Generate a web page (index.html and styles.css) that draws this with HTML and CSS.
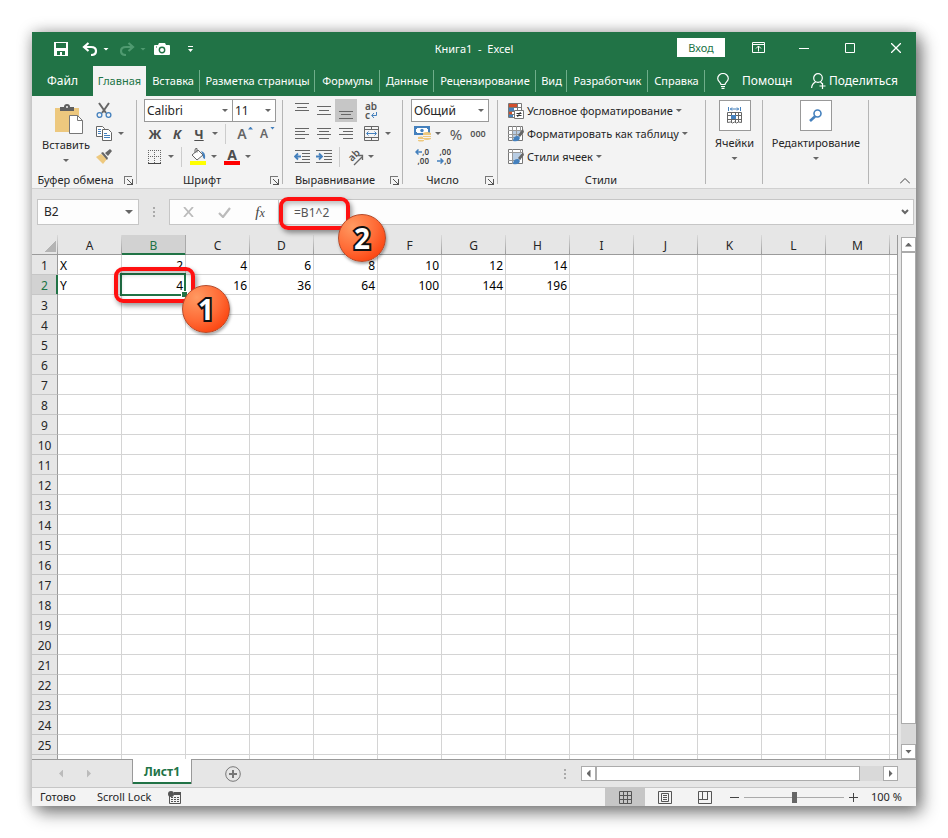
FILE: index.html
```html
<!DOCTYPE html>
<html lang="ru">
<head>
<meta charset="utf-8">
<title>Книга1 - Excel</title>
<link rel="stylesheet" href="styles.css">
</head>
<body>
<div class="window">
  <header class="titlebar">
    <div class="quick">
      <button class="w22" aria-label="Сохранить"><svg width="14" height="14" viewBox="0 0 14 14"><path d="M0 0h14v14H0z" fill="#fff"/><path d="M2 1h10v5H2zM3 9h8v4H8v-3H6v3H3z" fill="#217346"/></svg></button>
      <button class="w22 undo" aria-label="Отменить"><svg width="16" height="14" viewBox="0 0 16 14" fill="none" stroke="#fff" stroke-width="2.2"><path d="M6.500 1L2 5l4.500 4M2 5h7c3 0 5 1.500 5 4s-2 4-5 4"/></svg></button>
      <span class="caret"></span>
      <button class="w22 redo" aria-label="Вернуть"><svg width="16" height="14" viewBox="0 0 16 14" fill="none" stroke="#4f9a70" stroke-width="2.200"><path d="M9.500 1L14 5 9.500 9M14 5H7C4 5 2 6.500 2 9s2 4 5 4"/></svg></button>
      <span class="caret faded"></span>
      <button class="w22 camera" aria-label="Камера"><svg width="16" height="13" viewBox="0 0 16 13"><path d="M0 3q0-1 1-1h3l1-2h6l1 2h3q1 0 1 1v8q0 1-1 1H1q-1 0-1-1z" fill="#fff"/><circle cx="8" cy="7" r="2.700" fill="none" stroke="#217346" stroke-width="1.400"/><path d="M2 4h1" stroke="#217346"/></svg></button>
      <button class="w22 more" aria-label="Настройка панели"><svg width="5" height="7" viewBox="0 0 5 7" fill="#fff"><path d="M0 0h5v1H0zM0 3h5L2.500 6z"/></svg></button>
    </div>
    <div class="doc-title">Книга1&nbsp; -&nbsp; Excel</div>
    <div class="controls">
      <button class="signin">Вход</button>
      <button class="ctl" aria-label="Параметры ленты"><svg width="13" height="11" viewBox="0 0 13 11" fill="none" stroke="#fff"><path d="M.5.500h12v10H.5zM0 2.500h13M6.500 9.500V4M4 6.500L6.500 4 9 6.500"/></svg></button>
      <button class="ctl" aria-label="Свернуть"><svg width="10" height="10" viewBox="0 0 10 10" stroke="#fff"><path d="M0 5.500h10"/></svg></button>
      <button class="ctl" aria-label="Развернуть"><svg width="10" height="10" viewBox="0 0 10 10" fill="none" stroke="#fff"><path d="M.5.500h9v9h-9z"/></svg></button>
      <button class="ctl close" aria-label="Закрыть"><svg width="10" height="10" viewBox="0 0 10 10" stroke="#fff" stroke-width="1.300"><path d="M0 0l10 10M10 0L0 10"/></svg></button>
    </div>
  </header>

  <nav class="tabs">
    <a class="file" href="#">Файл</a><a class="active" href="#">Главная</a><a href="#">Вставка</a><a href="#">Разметка страницы</a><a href="#">Формулы</a><a href="#">Данные</a><a href="#">Рецензирование</a><a href="#">Вид</a><a href="#">Разработчик</a><a href="#">Справка</a>
    <a class="tool help" href="#"><svg width="12" height="16" viewBox="0 0 12 16" fill="none" stroke="#fff" stroke-width="1.200"><path d="M4 11.500c0-2-3.300-3-3.300-6a5.300 5 0 0 1 10.600 0c0 3-3.300 4-3.300 6zM4 13.500h4M4.500 15.300h3"/></svg>Помощн</a>
    <a class="tool share" href="#"><svg width="15" height="16" viewBox="0 0 15 16" fill="none" stroke="#fff" stroke-width="1.200"><circle cx="7" cy="5" r="4.300"/><path d="M.6 15c.2-3 1.800-5 4-6M9.500 9l1.500 1.500M11.500 10v6M8.500 13h6"/></svg>Поделиться</a>
  </nav>

  <section class="ribbon">
    <div class="group clip">
      <div class="clip-body">
        <button class="big paste">
          <svg width="30" height="31" viewBox="0 0 30 31"><path d="M1 5h24v24H1z" fill="#edc87e"/><path d="M6 4h4q0-3 3-3t3 3h4v4H6z" fill="#5f5f5f"/><circle cx="13" cy="4" r="1" fill="#f3f3f3"/><path d="M15.500 12.500h8l5 5v13h-13z" fill="#fff" stroke="#777"/><path d="M23.500 12.500v5h5" fill="none" stroke="#777"/></svg>
          <span>Вставить</span><i class="caret"></i>
        </button>
        <div class="clip-side">
          <div class="row"><button class="w22" aria-label="Вырезать"><svg width="16" height="17" viewBox="0 0 16 17" fill="none"><path d="M3 1l7 10M13 1L6 11" stroke="#666" stroke-width="2"/><circle cx="3.500" cy="13" r="2.400" stroke="#4480bd" stroke-width="1.300"/><circle cx="12.500" cy="13" r="2.400" stroke="#4480bd" stroke-width="1.300"/></svg></button></div>
          <div class="row"><button class="w22" aria-label="Копировать"><svg width="16" height="15" viewBox="0 0 16 15" fill="#fff" stroke="#666"><path d="M.5.500h6l2 2v8h-8z"/><path d="M6.500 3.500h6l3 3v8h-9z"/><path d="M2 3.500h3M2 5.500h3M2 7.500h3M8 7.500h3M8 9.500h6M8 11.500h6" stroke="#4480bd"/></svg></button><span class="caret gap"></span></div>
          <div class="row"><button class="w22" aria-label="Формат по образцу"><svg width="16" height="15" viewBox="0 0 16 15"><path d="M0 8l5-3 6 5-4 5z" fill="#edc87e"/><path d="M5 4l2-1 5 6-1 2zM9 4l5-4 2 2-4 5z" fill="#666"/></svg></button></div>
        </div>
      </div>
      <div class="label">Буфер обмена<button class="launch" aria-label="Буфер обмена"></button></div>
    </div>

    <div class="group font">
      <div class="row"><label class="combo face"><select aria-label="Шрифт"><option>Calibri</option></select></label><label class="combo size"><select aria-label="Размер"><option>11</option></select></label></div>
      <div class="row">
        <button class="w22 letter">Ж</button><button class="w22 letter ital">К</button><button class="w22 letter under">Ч</button><span class="caret"></span><span class="sep"></span>
        <button class="w22 letter grow">A<i class="tri up"></i></button><button class="w22 letter shrink">A<i class="tri down"></i></button>
      </div>
      <div class="row">
        <button class="w22" aria-label="Границы"><svg width="14" height="14" viewBox="0 0 14 14" fill="none" stroke="#666"><path d="M.5 0v13M6.500 0v13M12.500 0v13M0 .5h13M0 6.500h13" stroke-dasharray="1 1"/><path d="M0 13.500h13" stroke="#444"/></svg></button><span class="caret"></span><span class="sep"></span>
        <button class="w22" aria-label="Заливка"><svg width="17" height="17" viewBox="0 0 17 17"><path d="M2 7l6-5 5 5-6 5z" fill="#fff" stroke="#666"/><path d="M5 5V2q0-2 2-1.500v4" fill="none" stroke="#666"/><path d="M11 3q5 1 4 8-3-1-2-4z" fill="#4480bd"/><path d="M0 13h16v4H0z" fill="#ff0"/></svg></button><span class="caret"></span>
        <button class="w22 letter color">A</button><span class="caret"></span>
      </div>
      <div class="label">Шрифт<button class="launch" aria-label="Шрифт"></button></div>
    </div>

    <div class="group align">
      <div class="row">
        <button class="w22" aria-label="По верхнему краю"><svg class="ln" viewBox="0 0 14 16"><path d="M0 .5h14M2 4.500h10M0 7.500h14"/></svg></button>
        <button class="w22" aria-label="По середине"><svg class="ln" viewBox="0 0 14 16"><path d="M0 3.500h14M2 7.500h10M0 11.500h14"/></svg></button>
        <button class="w22 pressed" aria-label="По нижнему краю"><svg class="ln" viewBox="0 0 14 16"><path d="M0 8.500h14M2 11.500h10M0 15.500h14"/></svg></button>
        <button class="w22 wrap" aria-label="Перенос текста"><span>ab</span><span>c<svg width="6" height="6" viewBox="0 0 6 6" fill="none" stroke="#4480bd"><path d="M5.500 0v3.500H1M3 1L.7 3.500 3 6"/></svg></span></button>
      </div>
      <div class="row">
        <button class="w22" aria-label="По левому краю"><svg class="ln" viewBox="0 0 14 16"><path d="M0 2.500h14M0 5.500h10M0 8.500h14M0 12.500h10"/></svg></button>
        <button class="w22" aria-label="По центру"><svg class="ln" viewBox="0 0 14 16"><path d="M0 2.500h14M2 5.500h10M0 8.500h14M2 12.500h10"/></svg></button>
        <button class="w22" aria-label="По правому краю"><svg class="ln" viewBox="0 0 14 16"><path d="M0 2.500h14M4 5.500h10M0 8.500h14M4 12.500h10"/></svg></button>
        <button class="w22 merge" aria-label="Объединить"><svg width="15" height="15" viewBox="0 0 15 15" fill="none" stroke="#666"><path d="M.5.500h14v14H.5zM0 3.500h15M0 11.500h15M7.500 0v3M7.500 12v3"/><path d="M3 7.500h9M4.500 5.500l-2 2 2 2M10.500 5.500l2 2-2 2" stroke="#4480bd"/></svg></button><span class="caret gap"></span>
      </div>
      <div class="row">
        <button class="w22" aria-label="Уменьшить отступ"><svg width="16" height="13" viewBox="0 0 16 13" fill="none" stroke="#666"><path d="M1 .5h15M8 3.500h8M8 6.500h8M8 9.500h8M1 12.500h15"/><path d="M1 6.500h6M4 3.500l-3 3 3 3" stroke="#4480bd" stroke-width="1.800"/></svg></button>
        <button class="w22" aria-label="Увеличить отступ"><svg width="16" height="13" viewBox="0 0 16 13" fill="none" stroke="#666"><path d="M0 .5h16M8 3.500h8M8 6.500h8M8 9.500h8M0 12.500h16"/><path d="M0 6.500h6M3 3.500l3 3-3 3" stroke="#4480bd" stroke-width="1.800"/></svg></button><span class="sep sep-tight"></span>
        <button class="w22 orient" aria-label="Ориентация"><svg width="18" height="18" viewBox="0 0 18 18"><text x="6" y="14" transform="rotate(-45 6 14)" class="ab">ab</text><path d="M8 17l8-8M12 7.500h4.500V12" fill="none" stroke="#666" stroke-width="1.300"/></svg></button><span class="caret"></span>
      </div>
      <div class="label">Выравнивание<button class="launch" aria-label="Выравнивание"></button></div>
    </div>

    <div class="group number">
      <div class="row"><label class="combo"><select aria-label="Формат числа"><option>Общий</option></select></label></div>
      <div class="row">
        <button class="w22" aria-label="Финансовый формат"><svg width="17" height="16" viewBox="0 0 17 16"><path d="M0 0h16v9H0z" fill="#4480bd"/><path d="M3 2h10v1h1v3h-1v1H3V6H2V3h1z" fill="#fff"/><circle cx="8" cy="4.500" r="1.700" fill="#4480bd"/><path d="M9 7q4-2 8 0v6q-4 2-8 0zM4 11q3-1 6 0v4q-3 1-6 0z" fill="#edc87e"/><path d="M9 9.500h8M9 11.500h8M4 13.500h6" stroke="#f3f3f3"/></svg></button><span class="caret"></span>
        <button class="w22 percent">%</button><button class="w22 thousands">000</button>
      </div>
      <div class="row">
        <button class="w22 digits" aria-label="Увеличить разрядность"><span><svg width="7" height="6" viewBox="0 0 7 6" fill="none" stroke="#4480bd" stroke-width="1.500"><path d="M1 3h6M3.500.500L1 3l2.500 2.500"/></svg>,0</span><span>,00</span></button><button class="w22 digits" aria-label="Уменьшить разрядность"><span>,00</span><span><svg width="7" height="6" viewBox="0 0 7 6" fill="none" stroke="#4480bd" stroke-width="1.500"><path d="M0 3h6M3.500.500L6 3 3.500 5.500"/></svg>,0</span></button>
      </div>
      <div class="label">Число<button class="launch" aria-label="Число"></button></div>
    </div>

    <div class="group styles">
      <div class="row"><button class="text"><svg width="16" height="16" viewBox="0 0 16 16"><path d="M.5.500h13v14H.5zM0 4.500h14M0 8.500h8M0 11.500h6M9.500 0v8" fill="#fff" stroke="#777"/><path d="M1 1h8v3H1zM1 9h3v2H1z" fill="#d24f2d"/><path d="M1 5h5v3H1zM1 12h4v2H1z" fill="#4480bd"/><path d="M6.500 7.500h9v8h-9z" fill="#fff" stroke="#777"/><path d="M8.500 10.500h5M8.500 12.500h5M12.500 9l-3 5" stroke="#333"/></svg>Условное форматирование<i class="caret"></i></button></div>
      <div class="row"><button class="text"><svg width="16" height="16" viewBox="0 0 16 16"><path d="M.5.500h14v14H.5z" fill="#fff" stroke="#777"/><path d="M5 4h7v7H5z" fill="#b9cde3"/><path d="M0 4.500h15M0 8.500h15M0 11.500h10M4.500 0v15M8.500 0v12M12.500 0v8" stroke="#999"/><path d="M15 3l-5 6 2 2 4-5z" fill="#666"/><path d="M5 15q0-5 5-5 3 1 1 4-2 2-6 1z" fill="#4480bd"/></svg>Форматировать как таблицу<i class="caret"></i></button></div>
      <div class="row"><button class="text"><svg width="16" height="16" viewBox="0 0 16 16"><path d="M.5.500h14v14H.5z" fill="#fff" stroke="#777"/><path d="M5 4h8v7H5z" fill="#b9cde3"/><path d="M0 3.500h15M0 11.500h8M4.500 0v15M12.500 0v4" stroke="#999"/><path d="M15 3l-5 6 2 2 4-5z" fill="#666"/><path d="M5 15q0-5 5-5 3 1 1 4-2 2-6 1z" fill="#4480bd"/></svg>Стили ячеек<i class="caret"></i></button></div>
      <div class="label">Стили</div>
    </div>

    <div class="group">
      <button class="big boxed"><span class="box"><svg width="16" height="17" viewBox="0 0 16 17" fill="none"><path d="M1.500 0v4M13.500 0v4M3 2h9M5 .5L3.500 2 5 3.500M10 .5L11.500 2 10 3.500" stroke="#4480bd"/><path d="M.5 5.500h14v10l-3-.5-2 1-2-1-2 1-2-1-3 .5zM0 8.500h15M0 12.500h15M4.500 5v10M8.500 5v10M11.500 5v10" stroke="#666"/><path d="M4 8h5v4H4z" fill="#4480bd"/></svg></span><span>Ячейки</span><i class="caret"></i></button>
    </div>
    <div class="group">
      <button class="big boxed"><span class="box"><svg width="14" height="14" viewBox="0 0 14 14" fill="none" stroke="#4480bd"><circle cx="8.500" cy="4.500" r="3.500" stroke-width="1.600"/><path d="M6 7.500l-5 4.500" stroke-width="2.600"/></svg></span><span>Редактирование</span><i class="caret"></i></button>
    </div>
    <button class="collapse" aria-label="Свернуть ленту"><svg width="10" height="6" viewBox="0 0 10 6" fill="none" stroke="#444"><path d="M0 5.500l5-5 5 5"/></svg></button>
  </section>

  <section class="formula-bar">
    <label class="namebox"><input value="B2" aria-label="Имя"><i class="caret"></i></label>
    <span class="dots"></span>
    <div class="fx-buttons">
      <button aria-label="Отмена"><svg width="11" height="10" viewBox="0 0 11 10" stroke="#bbb" stroke-width="1.800"><path d="M1 0l9 10M10 0L1 10"/></svg></button>
      <button aria-label="Ввод"><svg width="13" height="11" viewBox="0 0 13 11" fill="none" stroke="#bbb" stroke-width="2.200"><path d="M1 6l4 4 7-9"/></svg></button>
      <button class="fx">f<small>x</small></button>
    </div>
    <input class="formula" value="=B1^2" aria-label="Строка формул">
    <button class="expand" aria-label="Развернуть строку формул"><svg width="8" height="6" viewBox="0 0 8 6" fill="none" stroke="#666" stroke-width="2"><path d="M1 1l3 3 3-3"/></svg></button>
  </section>

  <main class="sheet">
    <div class="grid">
      <table>
        <colgroup><col class="head"><col><col><col><col><col><col><col><col><col><col><col><col><col><col></colgroup>
        <thead><tr><th class="corner"></th><th>A</th><th class="sel">B</th><th>C</th><th>D</th><th>E</th><th>F</th><th>G</th><th>H</th><th>I</th><th>J</th><th>K</th><th>L</th><th>M</th><th></th></tr></thead>
        <tbody id="rows"></tbody>
      </table>
    </div>
    <div class="vscroll"><button aria-label="Вверх"><i class="tri-u"></i></button><div class="thumb"></div><button aria-label="Вниз"><i class="tri-d"></i></button></div>
  </main>

  <footer>
    <div class="sheet-tabs">
      <button class="nav" aria-label="Предыдущий лист"><i class="tri-l"></i></button><button class="nav" aria-label="Следующий лист"><i class="tri-r"></i></button>
      <a class="sheet-tab" href="#">Лист1</a>
      <button class="add" aria-label="Новый лист"><svg width="16" height="16" viewBox="0 0 16 16" fill="none" stroke="#777"><circle cx="8" cy="8" r="7.300"/><path d="M4 8h8M8 4v8" stroke-width="2"/></svg></button>
      <span class="dots"></span>
      <div class="hscroll"><button aria-label="Влево"><i class="tri-l"></i></button><div class="thumb"></div><button aria-label="Вправо"><i class="tri-r"></i></button></div>
    </div>
    <div class="status">
      <span>Готово</span><span class="lock">Scroll Lock</span>
      <svg class="macro" width="13" height="13" viewBox="0 0 13 13"><path d="M6 1h7v3H6z" fill="#555"/><path d="M1.500 5v7.500h11V3" fill="none" stroke="#555"/><path d="M3 6.500h8M3 8.500h8M3 10.500h8" stroke="#555" stroke-dasharray="2 1"/><circle cx="3" cy="3" r="3" fill="#555"/></svg>
      <button class="view on" aria-label="Обычный"><svg width="13" height="13" viewBox="0 0 13 13" fill="none" stroke="#555"><path d="M.5.500h12v12H.5zM0 4.500h13M0 8.500h13M4.500 0v13M8.500 0v13"/></svg></button>
      <button class="view" aria-label="Разметка страницы"><svg width="14" height="13" viewBox="0 0 14 13" fill="none" stroke="#555"><path d="M.5.500h13v12H.5zM3.500 2.500h7v8h-7zM5 4.500h4M5 6.500h4M5 8.500h4"/></svg></button>
      <button class="view" aria-label="Страничный"><svg width="14" height="13" viewBox="0 0 14 13" fill="none" stroke="#555"><path d="M.5.500h13v12H.5zM4.500 0v8M9.500 0v8M0 8.500h10"/></svg></button>
      <button class="zoom" aria-label="Уменьшить"><svg width="9" height="9" viewBox="0 0 9 9" stroke="#444"><path d="M0 4.500h9"/></svg></button>
      <input type="range" min="0" max="100" value="50" aria-label="Масштаб">
      <button class="zoom" aria-label="Увеличить"><svg width="9" height="9" viewBox="0 0 9 9" stroke="#444"><path d="M0 4.500h9M4.500 0v9"/></svg></button>
      <span class="percentage">100 %</span>
    </div>
  </footer>

  <div class="mark mark-cell"></div><div class="ball ball-one">1</div>
  <div class="mark mark-formula"></div><div class="ball ball-two">2</div>
</div>
<script src="rows.js"></script>
</body>
</html>
```
FILE: rows.js
```js
const values = {
  1: ["X", 2, 4, 6, 8, 10, 12, 14],
  2: ["Y", 4, 16, 36, 64, 100, 144, 196]
};
const numbered = 25;
const body = document.getElementById("rows");
for (let r = 1; r <= numbered + 1; r++) {
  const tr = document.createElement("tr");
  const th = document.createElement("th");
  if (r <= numbered) th.textContent = r;
  if (r === 2) th.className = "sel";
  tr.append(th);
  for (let c = 0; c < 14; c++) {
    const td = document.createElement("td");
    const v = (values[r] || [])[c];
    if (v !== undefined) td.textContent = v;
    if (typeof v === "string") td.className = "txt";
    if (r === 2 && c === 1) td.className = "cursor";
    tr.append(td);
  }
  body.append(tr);
}
```
FILE: styles.css
```css
* { box-sizing: border-box; }
body { margin: 0; padding: 32px; background: #fff; font: 12px/16px "Noto Sans", "Open Sans", sans-serif; color: #262626; }
button, input, select { font: inherit; color: inherit; background: none; border: 0; padding: 0; margin: 0; border-radius: 0; }
button { display: inline-flex; align-items: center; justify-content: center; flex: none; }
a { color: inherit; text-decoration: none; }
svg { display: block; flex: none; }
.window { position: relative; height: calc(100vh - 64px); display: flex; flex-direction: column; background: #e6e6e6; box-shadow: 0 0 14px rgba(0,0,0,.28), 6px 7px 16px rgba(0,0,0,.45); }
.w22 { width: 22px; height: 22px; }
.caret { flex: none; width: 10px; height: 3px; background: #666; clip-path: polygon(20% 0, 80% 0, 50% 100%); }

.titlebar { display: grid; grid-template-columns: 1fr auto 1fr; height: 34px; background: #217346; color: #fff; }
.quick { display: flex; align-items: center; padding-left: 18px; }
.quick .caret { background: #fff; }
.quick .faded { background: #4f9a70; }
.undo { margin-left: 7px; }
.redo { margin-left: 5px; }
.camera { margin-left: 3px; }
.more { margin-left: 6px; }
.doc-title { font-size: 11px; line-height: 33px; }
.controls { display: flex; justify-content: flex-end; align-items: flex-start; height: 32px; }
.signin { width: 48px; height: 19px; margin: 6px 10px 0 0; background: #fff; color: #217346; font-size: 11px; }
.ctl { width: 46px; height: 31px; }
.close { width: 43px; padding-left: 3px; }

.tabs { display: grid; grid-template-columns: 61px 53px 54px 115px 65px 54px 102px 31px 81px 57px 95px 1fr; height: 30px; background: #217346; color: #fff; align-items: stretch; white-space: nowrap; font-size: 11px; }
.tabs a { display: flex; justify-content: center; align-items: center; background: linear-gradient(#6fae8a, #6fae8a) right center / 1px 22px no-repeat; }
.tabs .file, .tabs .tool { background: none; font-size: 12px; }
.tabs .active { background: #f3f3f3; color: #217346; }
.tabs .tool { justify-content: flex-start; }
.help { padding-left: 12px; gap: 13px; }
.share { padding-left: 11px; gap: 3px; }

.ribbon { display: grid; grid-template-columns: 105px 146px 120px 95px 208px 57px 106px 1fr; height: 93px; background: #f3f3f3; border-bottom: 1px solid #d0d0d0; }
.group { display: flex; flex-direction: column; padding-top: 3px; background: linear-gradient(#b5b5b5, #b5b5b5) right 4px / 1px 84px no-repeat; min-width: 0; }
.row { display: flex; align-items: center; height: 23px; }
.label { position: relative; margin-top: 4px; height: 16px; text-align: center; font-size: 11px; white-space: nowrap; padding-right: 16px; }
.launch { position: absolute; right: 5px; top: 4px; width: 8px; height: 8px; border: 1px solid #777; border-right: 0; border-bottom: 0; }
.launch::after { content: ""; position: absolute; left: 2px; top: 2px; width: 5px; height: 5px; border: 1px solid #555; border-left: 0; border-top: 0; background: linear-gradient(to top right, transparent 42%, #555 42% 58%, transparent 58%); }
.big { flex-direction: column; justify-content: flex-start; font-size: 11px; }
.clip-body { display: flex; height: 69px; }
.paste { width: 61px; padding: 4px 0 0 7px; }
.paste span { margin-top: 3px; }
.paste .caret { margin-top: 6px; }
.paste svg { margin-left: 5px; }
.clip .label { padding-right: 18px; }
.gap { margin-left: 1px; }

.font .row { padding-left: 7px; }
.combo { position: relative; display: block; width: 78px; height: 23px; background: #fff; border: 1px solid #999; }
.combo select { appearance: none; width: 100%; height: 100%; padding-left: 2px; outline: 0; }
.combo::after { content: ""; position: absolute; right: 4px; top: 9px; width: 6px; height: 3px; background: #666; clip-path: polygon(0 0, 100% 0, 50% 100%); pointer-events: none; }
.face { width: 89px; }
.size { width: 44px; margin-left: -1px; }
.letter { font-weight: 700; font-size: 13px; color: #4d4d4d; }
.ital { font-style: italic; }
.under { text-decoration: underline; }
.sep { flex: none; width: 1px; height: 20px; margin: 0 5px; background: #ccc; }
.sep-tight { margin: 0 4px; }
.grow, .shrink { font-weight: 600; font-size: 14px; position: relative; color: #666; }
.shrink { font-size: 12px; }
.tri { position: absolute; right: 0; top: 4px; width: 5px; height: 3px; background: #4480bd; }
.up { clip-path: polygon(50% 0, 100% 100%, 0 100%); }
.down { clip-path: polygon(0 0, 100% 0, 50% 100%); }
.color { font-size: 14px; line-height: 14px; width: 16px; height: 17px; margin: 0 3px 0 5px; border-bottom: 4px solid #f00; }

.align .row { padding-left: 8px; }
.ln { width: 14px; height: 16px; stroke: #666; fill: none; }
.pressed { height: 23px; background: #c6c6c6; }
.wrap { flex-direction: column; line-height: 10px; font-size: 10px; font-weight: 600; color: #555; margin-left: 3px; }
.wrap span { display: flex; align-items: center; gap: 1px; height: 9px; }
.merge { margin-left: 3px; }
.orient svg { overflow: visible; }
.ab { font: 600 10px "Noto Sans", sans-serif; fill: #555; }

.number .row { padding-left: 8px; }
.percent { font-size: 15px; color: #555; margin-left: 2px; }
.thousands { font-size: 9px; font-weight: 600; color: #555; }
.digits { flex-direction: column; align-items: flex-end; padding-right: 4px; font-size: 8px; line-height: 8px; font-weight: 600; color: #444; }
.digits span { display: flex; align-items: center; height: 9px; }

.styles .row { padding-left: 10px; }
.text { gap: 3px; white-space: nowrap; font-size: 11px; }
.text .caret { margin-left: -2px; }
.styles .label { padding: 0 2px 0 0; }
.boxed { width: 100%; padding-top: 1px; white-space: nowrap; }
.box { display: flex; align-items: center; justify-content: center; width: 32px; height: 31px; border: 1px solid #999; background: #fff; margin-bottom: 4px; }
.boxed .caret { margin-top: 6px; }
.collapse { justify-self: end; align-self: end; padding: 4px 6px; }

.formula-bar { display: flex; align-items: flex-start; padding: 10px 2px 0 5px; height: 46px; flex: none; }
.namebox { display: flex; align-items: center; width: 102px; height: 26px; background: #fdfdfd; border: 1px solid #c6c6c6; padding-right: 4px; }
.namebox input { width: 100%; min-width: 0; padding-left: 6px; }
.namebox .caret { height: 4px; clip-path: polygon(10% 0, 90% 0, 50% 100%); }
.dots { flex: none; width: 2px; height: 10px; background: repeating-linear-gradient(#aaa 0 2px, transparent 2px 4px); }
.formula-bar .dots { margin: 8px 14px 0; }
.fx-buttons { display: flex; align-items: center; width: 110px; height: 26px; background: #fdfdfd; border: 1px solid #c6c6c6; }
.fx-buttons button { width: 36px; height: 24px; }
.fx { font: italic 15px "Liberation Serif", serif; color: #444; }
.fx small { font-size: 12px; padding-top: 3px; }
.formula { flex: 1; min-width: 0; height: 26px; background: #fdfdfd; border: 1px solid #c6c6c6; border-width: 1px 0; padding-left: 15px; color: #555; }
.expand { width: 17px; height: 26px; background: #fdfdfd; border: 1px solid #c6c6c6; border-left: 0; }

.sheet { flex: 1; min-height: 0; display: flex; gap: 3px; }
.grid { flex: 1; min-width: 0; overflow: hidden; border-right: 1px solid #999; background: #fff; }
table { table-layout: fixed; width: 922px; border-collapse: separate; border-spacing: 0; color: #000; }
col { width: 64px; }
col.head { width: 26px; }
th { height: 20px; padding: 2px 0 0; font-weight: 400; line-height: 17px; color: #262626; background: #e6e6e6; }
thead th { border-bottom: 1px solid #999; border-right: 1px solid; border-image: linear-gradient(#ddd, #999) 1; }
thead th.sel { background: #d2d2d2; color: #217346; border-image: none; border-right-color: #aaa; border-bottom-color: #217346; box-shadow: inset 0 -1px #217346; }
tbody th { border-right: 1px solid #999; border-bottom: 1px solid #c6c6c6; }
tbody th.sel { background: #d2d2d2; color: #217346; border-right-color: #217346; box-shadow: inset -1px 0 #217346; }
.corner { background: linear-gradient(135deg, #e6e6e6 50%, #b4b4b4 50%) 12px 5px / 12px 12px no-repeat #e6e6e6; }
td { height: 20px; padding: 2px 2px 0; text-align: right; line-height: 17px; border-right: 1px solid #d4d4d4; border-bottom: 1px solid #d4d4d4; }
td.txt { text-align: left; }
.cursor { position: relative; }
.cursor::before { content: ""; position: absolute; inset: -2px -1px -2px -2px; border: 2px solid #217346; }
.cursor::after { content: ""; position: absolute; right: -2px; bottom: -3px; width: 5px; height: 5px; background: #217346; outline: 1px solid #fff; }

.vscroll { display: flex; flex-direction: column; width: 15px; padding-top: 2px; background: #d9d9d9; box-shadow: inset 0 2px #e6e6e6; }
.vscroll button, .hscroll button { width: 15px; height: 15px; background: #fff; border: 1px solid #ababab; }
.vscroll .thumb { flex: 1; margin-bottom: 20px; background: #fff; border: 1px solid #ababab; }
.tri-u, .tri-d { width: 7px; height: 4px; background: #666; clip-path: polygon(50% 0, 100% 100%, 0 100%); }
.tri-d { clip-path: polygon(0 0, 100% 0, 50% 100%); }
.tri-l, .tri-r { width: 4px; height: 8px; background: #666; clip-path: polygon(100% 0, 100% 100%, 0 50%); }
.tri-r { clip-path: polygon(0 0, 100% 50%, 0 100%); }

.sheet-tabs { display: flex; align-items: center; height: 28px; padding: 0 18px 0 15px; border-top: 1px solid #999; }
.nav { width: 28px; }
.nav i { background: #bbb; }
.sheet-tab { align-self: flex-start; margin: -1px 0 0 29px; width: 60px; height: 25px; line-height: 26px; text-align: center; font-weight: 700; color: #217346; background: #fff; border: 1px solid #999; border-width: 0 1px; box-shadow: inset 0 -2px #217346; }
.add { margin: 0 auto 0 33px; }
.hscroll { display: flex; width: 317px; margin-left: 15px; background: #d9d9d9; }
.hscroll .thumb { flex: 1; margin-right: 23px; background: #fff; border: 1px solid #ababab; }
.status { display: flex; align-items: center; height: 19px; border-top: 1px solid #c6c6c6; background: #f3f3f3; font-size: 11px; padding: 0 15px 0 8px; }
.lock { margin-left: 21px; }
.macro { margin: 0 auto 0 17px; }
.view { width: 40px; height: 18px; }
.on { background: #c6c6c6; }
.zoom { width: 19px; height: 18px; }
.status input { appearance: none; width: 100px; height: 18px; background: linear-gradient(#aaa, #aaa) center / 100% 1px no-repeat; }
.status input::-webkit-slider-thumb { appearance: none; width: 5px; height: 11px; background: #666; }
.percentage { width: 38px; padding-left: 8px; white-space: nowrap; }

.mark { position: absolute; border: 4px solid #f11; border-radius: 9px; box-shadow: 2px 3px 5px rgba(0,0,0,.4), inset 2px 3px 5px rgba(0,0,0,.25); }
.mark-cell { left: 82px; top: 235px; width: 81px; height: 36px; }
.mark-formula { left: 247px; top: 165px; width: 71px; height: 33px; }
.ball { position: absolute; width: 48px; height: 48px; border-radius: 50%; border: 1px solid #b54a2a; background: radial-gradient(circle at 30% 25%, #ff9a62, #ff6a35 50%, #f93400 95%); box-shadow: 1px 2px 3px rgba(0,0,0,.35); display: flex; align-items: center; justify-content: center; font: 700 28px/28px "Noto Sans", sans-serif; color: #fff; -webkit-text-stroke: 4px #111; paint-order: stroke fill; }
.ball-one { left: 150px; top: 253px; }
.ball-two { left: 306px; top: 182px; }
```
